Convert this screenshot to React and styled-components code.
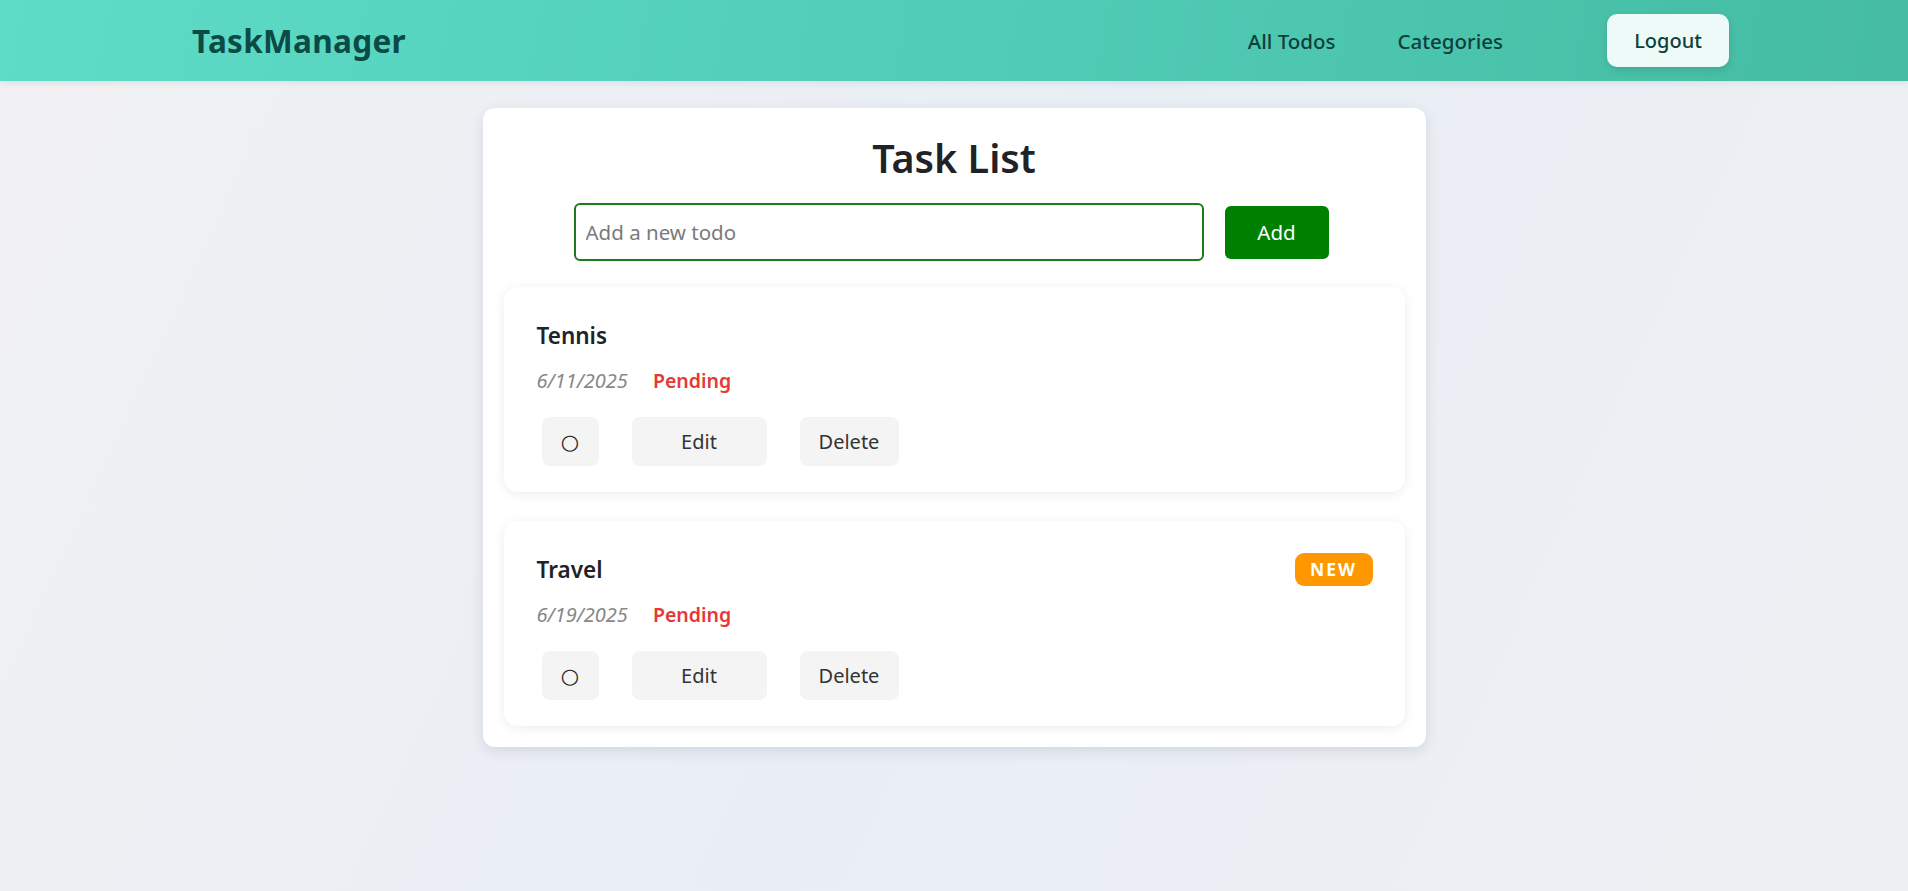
import styled, { createGlobalStyle } from 'styled-components';

const GlobalStyle = createGlobalStyle`
  * {
    box-sizing: border-box;
  }

  body {
    margin: 0;
    font-family: "Noto Sans", "Open Sans", sans-serif;
    color: #1f2328;
  }
`;

const Page = styled.div`
  min-height: 100vh;
  background: linear-gradient(115deg, #f1f1f2 0%, #e9eef6 50%, #eef0f2 100%);
`;

const Header = styled.header`
  height: 81px;
  display: flex;
  align-items: center;
  justify-content: space-between;
  padding: 0 179px 0 192px;
  background: linear-gradient(100deg, #5ddcc7 0%, #50cbb5 55%, #45bca3 100%);
  box-shadow: 0 2px 6px rgba(0, 0, 0, 0.08);
`;

const Logo = styled.div`
  font-size: 31.5px;
  font-weight: 700;
  color: #0b4a45;
  letter-spacing: 0.3px;
`;

const Nav = styled.nav`
  display: flex;
  align-items: center;
`;

const NavLink = styled.a`
  font-size: 20.5px;
  font-weight: 500;
  color: #0d3f3b;
  text-decoration: none;
  margin-right: ${props => props.$gap || 0}px;
  cursor: pointer;
`;

const LogoutButton = styled.button`
  width: 122px;
  height: 53px;
  border: none;
  border-radius: 10px;
  background: #edfaf7;
  color: #0d3f3b;
  font-family: inherit;
  font-size: 20px;
  font-weight: 500;
  box-shadow: 0 3px 8px rgba(0, 0, 0, 0.12);
  cursor: pointer;
`;

const MainCard = styled.main`
  width: 943px;
  margin: 27px auto 0;
  padding: 24px 21px 21px;
  background: #ffffff;
  border-radius: 12px;
  box-shadow: 0 4px 14px rgba(40, 50, 70, 0.12);
`;

const Title = styled.h1`
  margin: 0;
  text-align: center;
  font-size: 39.5px;
  font-weight: 600;
  line-height: 52px;
  color: #1f2328;
`;

const AddRow = styled.form`
  display: flex;
  align-items: center;
  justify-content: center;
  gap: 21px;
  margin-top: 19px;
  padding-right: 6px;
`;

const TodoInput = styled.input`
  width: 630px;
  height: 58px;
  padding: 0 10px;
  border: 2px solid #1d7a1d;
  border-radius: 6px;
  font-family: inherit;
  font-size: 20.5px;
  color: #333;
  outline: none;

  &::placeholder {
    color: #7a7a7a;
  }
`;

const AddButton = styled.button`
  width: 104px;
  height: 53px;
  border: none;
  border-radius: 6px;
  background: #008000;
  color: #ffffff;
  font-family: inherit;
  font-size: 20.5px;
  cursor: pointer;
`;

const TodoList = styled.div`
  display: flex;
  flex-direction: column;
  gap: 29px;
  margin-top: 26px;
`;

const TodoCard = styled.div`
  padding: 32px 32px 26px 33px;
  background: #ffffff;
  border-radius: 14px;
  box-shadow: 0 2px 12px rgba(0, 0, 0, 0.08);
`;

const TitleRow = styled.div`
  display: flex;
  align-items: center;
  justify-content: space-between;
  height: 32px;
`;

const TodoTitle = styled.h3`
  margin: 0;
  font-size: 22.5px;
  font-weight: 600;
  color: #1f2328;
`;

const NewBadge = styled.span`
  display: inline-flex;
  align-items: center;
  justify-content: center;
  width: 78px;
  height: 33px;
  border-radius: 9px;
  background: #ff9800;
  color: #ffffff;
  font-size: 17.5px;
  font-weight: 700;
  letter-spacing: 2px;
`;

const Meta = styled.div`
  display: flex;
  align-items: center;
  gap: 25px;
  margin-top: 16px;
  height: 26px;
`;

const DateText = styled.span`
  font-size: 20px;
  font-style: italic;
  color: #888888;
`;

const Status = styled.span`
  font-size: 19.5px;
  font-weight: 600;
  color: ${props => (props.$done ? '#2e7d32' : '#e53935')};
`;

const Actions = styled.div`
  display: flex;
  align-items: center;
  gap: 33px;
  margin-top: 24px;
  padding-left: 5px;
`;

const ActionButton = styled.button`
  height: 49px;
  min-width: ${props => props.$minWidth || 0}px;
  padding: 0 16px;
  border: none;
  border-radius: 8px;
  background: #f4f4f4;
  color: #333333;
  font-family: inherit;
  font-size: 20px;
  cursor: pointer;
`;

const ToggleGlyph = styled.span`
  font-family: "DejaVu Sans", sans-serif;
  font-size: 21px;
  line-height: 1;
  color: #222;
`;

const todos = [
  { id: 1, title: 'Tennis', date: '6/11/2025', isNew: false },
  { id: 2, title: 'Travel', date: '6/19/2025', isNew: true },
];

export default function App() {
  return (
    <Page>
      <GlobalStyle />
      <Header>
        <Logo>TaskManager</Logo>
        <Nav>
          <NavLink $gap={62}>All Todos</NavLink>
          <NavLink $gap={104}>Categories</NavLink>
          <LogoutButton>Logout</LogoutButton>
        </Nav>
      </Header>

      <MainCard>
        <Title>Task List</Title>
        <AddRow onSubmit={e => e.preventDefault()}>
          <TodoInput placeholder="Add a new todo" />
          <AddButton type="submit">Add</AddButton>
        </AddRow>

        <TodoList>
          {todos.map(todo => (
            <TodoCard key={todo.id}>
              <TitleRow>
                <TodoTitle>{todo.title}</TodoTitle>
                {todo.isNew && <NewBadge>NEW</NewBadge>}
              </TitleRow>
              <Meta>
                <DateText>{todo.date}</DateText>
                <Status>Pending</Status>
              </Meta>
              <Actions>
                <ActionButton $minWidth={57}><ToggleGlyph>○</ToggleGlyph></ActionButton>
                <ActionButton $minWidth={135}>Edit</ActionButton>
                <ActionButton $minWidth={99}>Delete</ActionButton>
              </Actions>
            </TodoCard>
          ))}
        </TodoList>
      </MainCard>
    </Page>
  );
}
